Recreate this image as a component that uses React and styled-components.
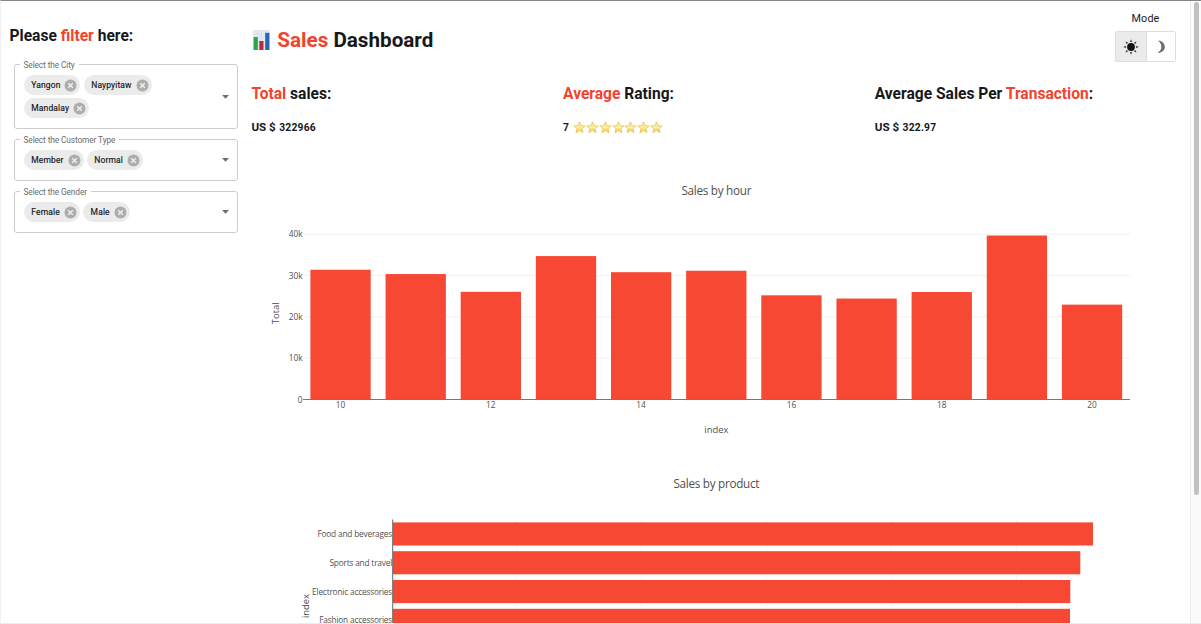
import React from "react";
import styled, { createGlobalStyle } from "styled-components";

const RED = "#f64833";
const INK = "#17181a";

const GlobalStyle = createGlobalStyle`
  * { box-sizing: border-box; }
  body { margin: 0; background: #fff; font-family: Roboto, "Liberation Sans", sans-serif; color: ${INK}; }
  h1, h2, h3, p, fieldset { margin: 0; }
`;

const Page = styled.div`
  display: flex;
  height: 624px;
  overflow: hidden;
  border-top: 1px solid #858585;
  border-left: 1px solid #f1f1f1;
  border-bottom: 1px solid #ececec;
`;

const Sidebar = styled.aside`
  flex: none;
  width: 250px;
  padding: 25px 13px 0 13px;
`;

const SidebarTitle = styled.h2`
  margin: 0 0 18px -4.5px;
  font-size: 15.6px;
  line-height: 20px;
  font-weight: 700;
  white-space: nowrap;
`;

const Accent = styled.span`
  color: #f1432e;
`;

const Select = styled.fieldset`
  position: relative;
  display: flex;
  align-items: center;
  height: ${(p) => p.$height}px;
  margin-bottom: ${(p) => p.$gap}px;
  padding: 0 8px 0 9px;
  border: 1px solid #cdcdcd;
  border-radius: 3px;
`;

const Label = styled.span`
  position: absolute;
  top: -6.5px;
  left: 4.5px;
  padding: 0 4px;
  background: #fff;
  color: #6b6b6b;
  font-size: 8.3px;
  line-height: 12px;
  letter-spacing: -0.1px;
  white-space: nowrap;
`;

const Chips = styled.div`
  display: flex;
  flex: 1;
  flex-wrap: wrap;
  gap: 3.5px;
  max-width: 150px;
  margin-right: auto;
`;

const ChipBox = styled.span`
  display: flex;
  align-items: center;
  gap: 4px;
  height: 19.5px;
  padding: 0 3px 0 7.3px;
  border-radius: 10px;
  background: #ebebeb;
  font-size: 8.5px;
  letter-spacing: 0.12px;
  -webkit-text-stroke: 0.15px ${INK};
`;

const Main = styled.main`
  display: flex;
  flex-direction: column;
  flex: none;
  width: 935px;
  padding-top: 26px;
`;

const Header = styled.header`
  display: flex;
  flex: none;
  align-items: center;
  gap: 7px;
  height: 26px;
  padding-left: 2.3px;
`;

const Title = styled.h1`
  font-size: 20.65px;
  line-height: 26px;
  font-weight: 700;
  white-space: nowrap;
`;

const Metrics = styled.section`
  display: grid;
  flex: none;
  align-content: start;
  grid-template-columns: repeat(3, 311.7px);
  height: 97px;
  padding: 31px 0 0 0.4px;
`;

const MetricTitle = styled.h2`
  margin-bottom: 15px;
  font-size: 15.57px;
  line-height: 20px;
  font-weight: 700;
  white-space: nowrap;
`;

const MetricValue = styled.p`
  display: flex;
  align-items: center;
  gap: 3.5px;
  height: 16px;
  font-size: 11.6px;
  font-weight: 700;
`;

const Digits = styled.span`
  font-size: 10.3px;
  letter-spacing: 0.2px;
`;

const Stars = styled.span`
  display: flex;
`;

const ModePanel = styled.div`
  flex: none;
  display: flex;
  flex-direction: column;
  align-items: center;
  margin-left: -71px;
  padding-top: 11px;
  width: 61px;
`;

const ModeLabel = styled.span`
  font-size: 10.8px;
  line-height: 14px;
  letter-spacing: 0.1px;
`;

const Toggle = styled.div`
  display: flex;
  margin-top: 5px;
  border: 1px solid #dedede;
  border-radius: 2px;
`;

const ToggleButton = styled.button`
  display: grid;
  place-items: center;
  width: 29.5px;
  height: 29px;
  padding: 0;
  border: 0;
  border-left: ${(p) => (p.$divided ? "1px solid #dedede" : "0")};
  background: ${(p) => (p.$active ? "#ebebeb" : "#fff")};
`;

const ScrollTrack = styled.div`
  flex: none;
  display: flex;
  justify-content: center;
  width: 11px;
  margin-left: auto;
  padding-top: 1px;
  background: #fafafa;
  border-left: 1px solid #ececec;
`;

const ScrollThumb = styled.div`
  width: 5px;
  height: 493px;
  border-radius: 3px;
  background: #c1c1c1;
`;

const Chart = styled.svg`
  display: block;
  flex: none;
  overflow: hidden;
  font-family: "Open Sans", "Noto Sans", sans-serif;
  fill: #505050;
`;

const ChartTitle = styled.text`
  font-size: 11.7px;
  letter-spacing: -0.27px;
  text-anchor: middle;
`;

const AxisTitle = styled.text`
  font-size: 9.4px;
  text-anchor: middle;
`;

const Tick = styled.text`
  font-size: 8.3px;
  text-anchor: ${(p) => p.$anchor};
`;

const CategoryTick = styled(Tick)`
  letter-spacing: -0.19px;
`;

const Remove = () => (
  <svg width="13" height="13" viewBox="0 0 13 13">
    <circle cx="6.5" cy="6.5" r="6" fill="#adadad" />
    <path d="M4.2 4.2l4.6 4.6M8.8 4.2L4.2 8.8" stroke="#f1f1f1" strokeWidth="1.3" />
  </svg>
);

const Caret = () => (
  <svg width="7" height="4" viewBox="0 0 7 4">
    <path d="M0 0h7L3.5 3.8z" fill="#6c6c6c" />
  </svg>
);

const Filter = ({ label, values, height, gap }) => (
  <Select $height={height} $gap={gap}>
    <Label>{label}</Label>
    <Chips>
      {values.map((v) => (
        <ChipBox key={v}>
          {v}
          <Remove />
        </ChipBox>
      ))}
    </Chips>
    <Caret />
  </Select>
);

const LogoIcon = () => (
  <svg width="17" height="20" viewBox="0 0 17 20">
    <rect width="17" height="20" fill="#e3eaf2" />
    <path d="M0 4h17M0 8h17M0 12h17M0 16h17M4.3 0v20M8.5 0v20M12.7 0v20" stroke="#cfdbe8" strokeWidth=".5" />
    <rect x="0.6" y="7" width="4.2" height="13" fill="#2ba44a" />
    <rect x="6.3" y="11" width="4.2" height="9" fill="#bd2a31" />
    <rect x="12.2" y="2.8" width="4.2" height="17.2" fill="#2766b8" />
  </svg>
);

const Star = () => (
  <svg width="12.95" height="13" viewBox="0 0 13 13">
    <defs>
      <linearGradient id="gold" x1="0" y1="0" x2="0" y2="1">
        <stop offset="0" stopColor="#f3dc92" />
        <stop offset=".5" stopColor="#fdf0a0" />
        <stop offset="1" stopColor="#f5bc2c" />
      </linearGradient>
    </defs>
    <path
      d="M6.5 .7l1.6 3.9 4.2.3-3.2 2.7 1 4.2-3.6-2.3-3.6 2.3 1-4.2L.7 4.9l4.2-.3z"
      fill="url(#gold)"
      stroke="#e9b944"
      strokeWidth=".6"
      strokeLinejoin="round"
    />
  </svg>
);

const Sun = () => (
  <svg width="16" height="16" viewBox="-8 -8 16 16" fill="#151515">
    <circle r="3.9" />
    {[0, 45, 90, 135, 180, 225, 270, 315].map((a) => (
      <path key={a} d="M-.75 -5.2L0 -7.3L.75 -5.2z" stroke="#151515" strokeWidth=".25" transform={`rotate(${a})`} />
    ))}
  </svg>
);

const Moon = () => (
  <svg width="10" height="14" viewBox="0 0 10 14">
    <path d="M1.8 .8C6 .6 8.8 3.4 8.8 7S5.6 13.3 1.2 12.7C4 11.6 5.3 9.6 5.3 6.8S4 2 1.8 .8z" fill="#6f6f6f" />
  </svg>
);

const hourly = [31421, 30377, 26066, 34723, 30828, 31179, 25226, 24445, 26030, 39700, 22970];
const products = [
  ["Food and beverages", 700],
  ["Sports and travel", 687.3],
  ["Electronic accessories", 677.3],
  ["Fashion accessories", 677],
];

const HourChart = () => {
  const base = 249.5;
  const y = (v) => base - (v * 165.2) / 40000;
  const x = (i) => 89.5 + i * 75.15;
  return (
    <Chart width="929" height="310" viewBox="0 0 929 310">
      <ChartTitle x="465.3" y="44.7">Sales by hour</ChartTitle>
      {[10, 20, 30, 40].map((k) => (
        <g key={k}>
          <path d={`M53 ${y(k * 1000)}H879`} stroke="#f1f1f1" />
          <Tick x="51.5" y={y(k * 1000) + 3} $anchor="end">{k}k</Tick>
        </g>
      ))}
      <Tick x="51.5" y={base + 3} $anchor="end">0</Tick>
      {hourly.map((v, i) => (
        <rect key={i} x={x(i) - 30.1} y={y(v)} width="60.3" height={base - y(v)} fill={RED} />
      ))}
      <path d={`M52 ${base}H879`} stroke="#777" />
      {[0, 2, 4, 6, 8, 10].map((i) => (
        <Tick key={i} x={x(i)} y="258.3" $anchor="middle">{10 + i}</Tick>
      ))}
      <AxisTitle x="465.3" y="283">index</AxisTitle>
      <AxisTitle transform="translate(28 163.3) rotate(-90)">Total</AxisTitle>
    </Chart>
  );
};

const ProductChart = () => (
  <Chart width="929" height="164" viewBox="0 0 929 164">
    <ChartTitle x="465.3" y="27.7">Sales by product</ChartTitle>
    {[266, 391, 516, 641, 766].map((gx) => (
      <path key={gx} d={`M${gx - 0.5} 60V164`} stroke="#f4f4f4" />
    ))}
    {products.map(([name, w], i) => (
      <g key={name}>
        <rect x="142" y={62.4 + i * 28.8} width={w} height="23.1" fill={RED} />
        <CategoryTick x="141.1" y={77 + i * 28.8} $anchor="end">{name}</CategoryTick>
      </g>
    ))}
    <path d="M141.7 59.5V164" stroke="#666" />
    <AxisTitle transform="translate(57.5 146) rotate(-90)">index</AxisTitle>
  </Chart>
);

export default function App() {
  return (
    <>
      <GlobalStyle />
      <Page>
        <Sidebar>
          <SidebarTitle>Please <Accent>filter</Accent> here:</SidebarTitle>
          <Filter label="Select the City" values={["Yangon", "Naypyitaw", "Mandalay"]} height={65} gap={10} />
          <Filter label="Select the Customer Type" values={["Member", "Normal"]} height={42} gap={10} />
          <Filter label="Select the Gender" values={["Female", "Male"]} height={42} gap={0} />
        </Sidebar>
        <Main>
          <Header>
            <LogoIcon />
            <Title><Accent>Sales</Accent> Dashboard</Title>
          </Header>
          <Metrics>
            <div>
              <MetricTitle><Accent>Total</Accent> sales:</MetricTitle>
              <MetricValue>US $ <Digits>322966</Digits></MetricValue>
            </div>
            <div>
              <MetricTitle><Accent>Average</Accent> Rating:</MetricTitle>
              <MetricValue>
                <Digits>7</Digits>
                <Stars>{Array.from({ length: 7 }, (_, i) => <Star key={i} />)}</Stars>
              </MetricValue>
            </div>
            <div>
              <MetricTitle>Average Sales Per <Accent>Transaction</Accent>:</MetricTitle>
              <MetricValue>US $ <Digits>322.97</Digits></MetricValue>
            </div>
          </Metrics>
          <HourChart />
          <ProductChart />
        </Main>
        <ModePanel>
          <ModeLabel>Mode</ModeLabel>
          <Toggle>
            <ToggleButton $active aria-label="Light"><Sun /></ToggleButton>
            <ToggleButton $divided aria-label="Dark"><Moon /></ToggleButton>
          </Toggle>
        </ModePanel>
        <ScrollTrack><ScrollThumb /></ScrollTrack>
      </Page>
    </>
  );
}
